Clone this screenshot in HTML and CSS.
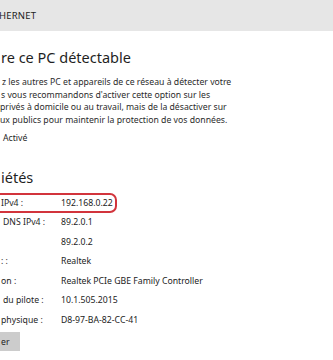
FILE: index.html
```html
<!DOCTYPE html>
<html lang="fr">
<head>
    <meta charset="UTF-8">
    <title>Ethernet</title>
    <link rel="stylesheet" href="styles.css">
</head>
<body>
    <div class="topbar">
        <span class="topbar-title">HERNET</span>
    </div>

    <div class="page">
        <h2 class="section-title">re ce PC détectable</h2>
        <p class="desc">
            <span class="l1">z les autres PC et appareils de ce réseau à détecter votre</span><br>
            <span class="l2">s vous recommandons d'activer cette option sur les</span><br>
            <span class="l3">privés à domicile ou au travail, mais de la désactiver sur</span><br>
            <span class="l4">ux publics pour maintenir la protection de vos données.</span>
        </p>
        <div class="toggle-row">Activé</div>

        <h2 class="section-title props-title">iétés</h2>
        <div class="props">
            <div class="prop">
                <span class="label">IPv4 :</span>
                <span class="value">192.168.0.22</span>
                <span class="mark"></span>
            </div>
            <div class="prop">
                <span class="label indent">DNS IPv4 :</span>
                <span class="value">89.2.0.1</span>
            </div>
            <div class="prop">
                <span class="label"></span>
                <span class="value">89.2.0.2</span>
            </div>
            <div class="prop">
                <span class="label">: :</span>
                <span class="value">Realtek</span>
            </div>
            <div class="prop">
                <span class="label">on :</span>
                <span class="value">Realtek PCIe GBE Family Controller</span>
            </div>
            <div class="prop">
                <span class="label indent">du pilote :</span>
                <span class="value">10.1.505.2015</span>
            </div>
            <div class="prop">
                <span class="label">physique :</span>
                <span class="value">D8-97-BA-82-CC-41</span>
            </div>
        </div>
        <button class="copy-btn">er</button>
    </div>
</body>
</html>
```

FILE: styles.css
```css
body {
    margin: 0;
    background: #fff;
    font-family: "Noto Sans", "Open Sans", sans-serif;
    color: #262626;
    overflow: hidden;
}
.topbar {
    height: 31px;
    background-color: #e6e6e6;
    display: flex;
    align-items: center;
}
.topbar-title {
    margin-left: -1px;
    font-size: 9.5px;
    letter-spacing: 0.2px;
    color: #222;
}
.page {
    padding-left: 1px;
}
.section-title {
    margin: 0;
    padding-top: 16px;
    font-size: 14.5px;
    font-weight: normal;
    line-height: 20px;
    color: #1f1f1f;
}
.desc {
    margin: 9px 0 0;
    font-size: 8.7px;
    line-height: 12.7px;
    color: #2b2b2b;
    white-space: nowrap;
}
.desc .l1 { margin-left: 1px; }
.desc .l3 { margin-left: -1px; }
.desc .l4 { margin-left: -1px; }
.toggle-row {
    display: flex;
    align-items: center;
    margin-top: 4px;
    padding-left: 2px;
    font-size: 8.7px;
    height: 14px;
}
.props-title {
    padding-top: 22px;
}
.props {
    margin-top: 6px;
}
.prop {
    position: relative;
    display: grid;
    grid-template-columns: 60px auto;
    height: 19.5px;
    align-items: center;
    font-size: 8.7px;
}
.label.indent {
    padding-left: 2px;
}
.mark {
    position: absolute;
    left: -12px;
    top: 0;
    width: 128px;
    height: 20px;
    border: 2px solid #d2343c;
    border-radius: 7px;
    box-sizing: border-box;
}
.value {
    color: #222;
}
.copy-btn {
    display: block;
    margin: 3px 0 0 -1px;
    width: 20px;
    height: 19px;
    padding: 0 0 0 1px;
    text-align: left;
    border: none;
    background: #cccccc;
    font-family: inherit;
    font-size: 8.7px;
    color: #222;
}
```
